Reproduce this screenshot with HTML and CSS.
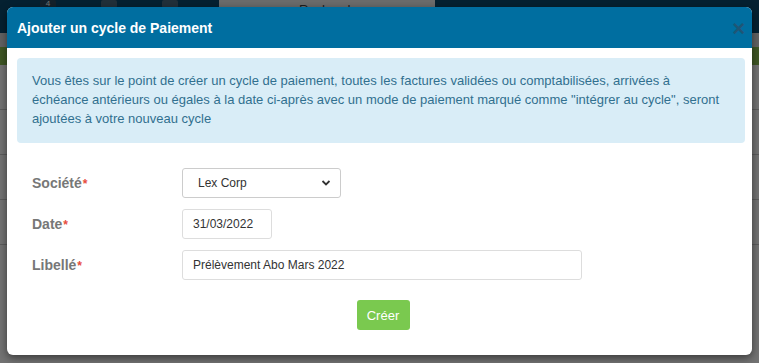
FILE: index.html
```html
<!DOCTYPE html>
<html lang="fr">
<head>
<meta charset="utf-8">
<link rel="stylesheet" href="styles.css">
</head>
<body>
<div class="app">
  <div class="topbar">
    <div class="tb-icons"><span class="tb-ico badge">4</span><span class="tb-ico"></span><span class="tb-ico"></span></div>
    <div class="tb-search">Rechercher</div>
  </div>
  <div class="page">
    <div class="greenbar"></div>
    <div class="row"></div>
    <div class="row"></div>
    <div class="row"></div>
    <div class="row"></div>
  </div>
  <div class="overlay"></div>
</div>

<div class="modal">
  <div class="modal-header">
    <h4 class="modal-title">Ajouter un cycle de Paiement</h4>
    <span class="close">×</span>
  </div>
  <div class="modal-body">
    <div class="alert">Vous êtes sur le point de créer un cycle de paiement, toutes les factures validées ou comptabilisées, arrivées à échéance antérieurs ou égales à la date ci-après avec un mode de paiement marqué comme "intégrer au cycle", seront ajoutées à votre nouveau cycle</div>
    <form class="form">
      <div class="form-row">
        <label class="label">Société<span class="req">*</span></label>
        <div class="select">
          <span>Lex Corp</span>
          <svg class="chev" width="10" height="8" viewBox="0 0 10 8"><path d="M1.5 2 L5 5.5 L8.5 2" fill="none" stroke="#333" stroke-width="1.8"/></svg>
        </div>
      </div>
      <div class="form-row">
        <label class="label">Date<span class="req">*</span></label>
        <div class="input date">31/03/2022</div>
      </div>
      <div class="form-row">
        <label class="label">Libellé<span class="req">*</span></label>
        <div class="input libelle">Prélèvement Abo Mars 2022</div>
      </div>
      <div class="actions">
        <button type="button" class="btn">Créer</button>
      </div>
    </form>
  </div>
</div>
</body>
</html>
```

FILE: styles.css
```css
* { box-sizing: border-box; }
html, body { margin: 0; padding: 0; }
body {
  width: 759px;
  height: 363px;
  overflow: hidden;
  font-family: "Liberation Sans", Arial, sans-serif;
  position: relative;
  background: #dcdcdc;
}
.app { position: relative; height: 363px; }
.topbar {
  height: 33px;
  background: #0d4a6e;
  display: flex;
  align-items: flex-start;
}
.tb-icons { width: 219px; display: flex; gap: 45px; padding-left: 40px; }
.tb-ico { display: block; width: 16px; height: 8px; background: #4a6b80; border-radius: 2px; }
.badge { font-size: 8px; color: #fff; line-height: 8px; text-align: center; background: #2d4d60; }
.tb-search {
  width: 216px;
  height: 28px;
  background: #f0f0f0;
  padding: 2px 0 0 80px;
  font-size: 13px;
  color: #444;
}
.page { background: #fff; height: 330px; }
.greenbar { height: 18px; background: #8cc152; margin-top: 14px; }
.row { height: 45px; border-bottom: 1px solid #ccc; }
.overlay {
  position: absolute;
  inset: 0;
  background: rgba(0, 0, 0, 0.55);
}

.modal {
  position: absolute;
  top: 7px;
  left: 7px;
  width: 745px;
  height: 348px;
  background: #fff;
  border-radius: 6px;
  overflow: hidden;
  box-shadow: 0 3px 9px rgba(0, 0, 0, 0.5);
}
.modal-header {
  height: 41px;
  background: #006ea0;
  display: flex;
  align-items: center;
  justify-content: space-between;
  padding: 0 7px 0 10px;
}
.modal-title {
  margin: 0;
  color: #fff;
  font-size: 14px;
  font-weight: bold;
}
.close {
  color: #1f5676;
  font-size: 22px;
  font-weight: bold;
  line-height: 1;
  margin-top: 3px;
}
.modal-body { padding: 10px 7px 0 10px; }
.alert {
  background: #d9edf7;
  color: #31708f;
  border-radius: 4px;
  padding: 13px 15px 15px 15px;
  font-size: 13px;
  line-height: 19px;
}
.form { padding-top: 25px; }
.form-row {
  display: flex;
  align-items: center;
  margin-bottom: 11px;
}
.label {
  width: 165px;
  padding-left: 15px;
  font-size: 14px;
  font-weight: bold;
  color: #777;
}
.req { color: #e74c3c; font-size: 12px; margin-left: 1px; }
.select, .input {
  height: 30px;
  border: 1px solid #ddd;
  border-radius: 3px;
  font-size: 12px;
  color: #333;
  display: flex;
  align-items: center;
  background: #fff;
}
.select {
  width: 159px;
  padding: 0 9px 0 15px;
  justify-content: space-between;
  border-color: #ccc;
}
.input { padding: 0 10px; }
.date { width: 90px; }
.libelle { width: 400px; }
.actions {
  display: flex;
  justify-content: center;
  padding-top: 9px;
  padding-left: 4px;
}
.btn {
  width: 53px;
  height: 30px;
  background: #7ac94f;
  color: #fff;
  border: none;
  border-radius: 3px;
  font-family: "Liberation Sans Narrow", "Liberation Sans", Arial, sans-serif;
  font-size: 13px;
  padding: 0;
}
```
